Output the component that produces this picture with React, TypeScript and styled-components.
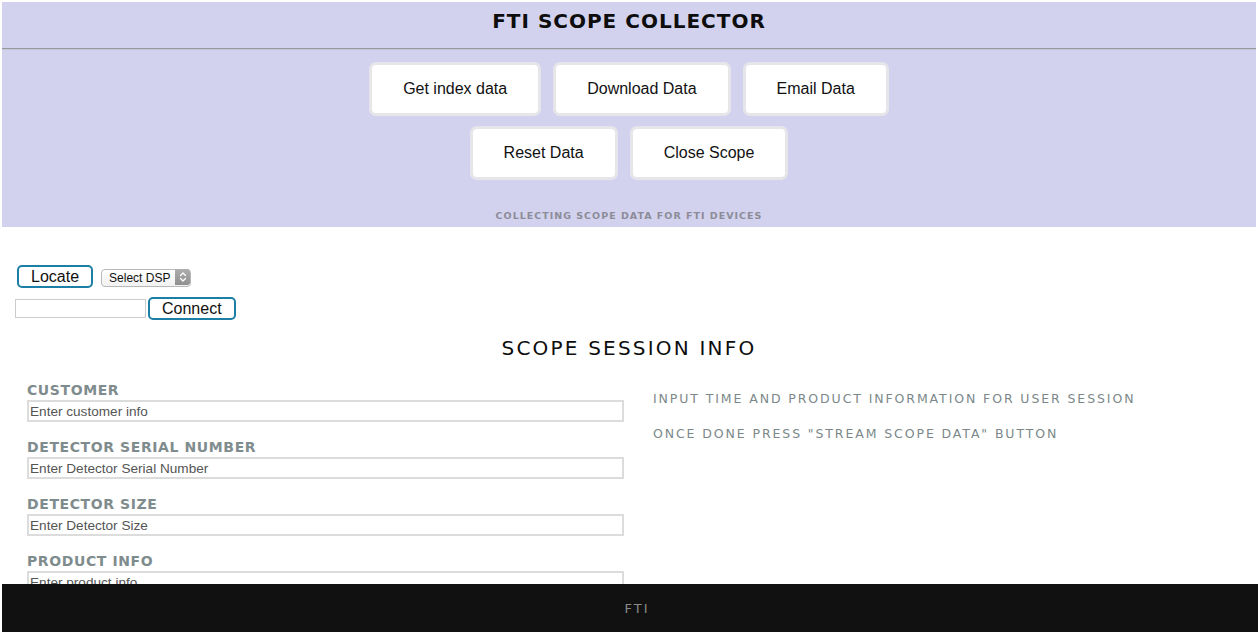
import React from "react";
import styled, { createGlobalStyle } from "styled-components";

const GlobalStyle = createGlobalStyle`
  html, body { background: #ffffff; }
  body {
    margin: 2px 4px 0 2px;
    font-family: "Liberation Sans", Arial, sans-serif;
    color: #111;
  }
  * { box-sizing: border-box; }
`;

const Header = styled.header`
  background: #d2d2ee;
  padding: 6px 0 5px;
`;

const Title = styled.h1`
  margin: 0 0 14px;
  font-family: "DejaVu Sans", Verdana, sans-serif;
  font-size: 20px;
  font-weight: bold;
  letter-spacing: 1px;
  line-height: 26px;
  text-align: center;
  color: #0d0d0d;
`;

const Rule = styled.hr`
  margin: 0;
  border: 0;
  border-top: 1px solid #9a9a9a;
  border-bottom: 1px solid #c4c4dc;
`;

const ButtonGroup = styled.div`
  display: flex;
  flex-direction: column;
  align-items: center;
  gap: 10px;
  padding-top: 12px;
`;

const ButtonRow = styled.div`
  display: flex;
  justify-content: center;
  gap: 12px;
`;

const ActionButton = styled.button`
  height: 54px;
  padding: 0 31px;
  background: #ffffff;
  border: 3px solid #e6e6ea;
  border-radius: 7px;
  font-family: "Liberation Sans", Arial, sans-serif;
  font-size: 16px;
  color: #111;
  cursor: pointer;
`;

const Subtitle = styled.div`
  margin-top: 30px;
  text-align: center;
  font-family: "DejaVu Sans", Verdana, sans-serif;
  font-size: 9.5px;
  font-weight: bold;
  letter-spacing: 1px;
  line-height: 12px;
  color: #8c8c98;
`;

const Controls = styled.section`
  display: flex;
  flex-direction: column;
  gap: 9px;
  padding: 38px 0 0 13px;
`;

const ControlRow = styled.div<{ $gap: number; $indent?: number }>`
  display: flex;
  align-items: center;
  gap: ${(p) => p.$gap}px;
  padding-left: ${(p) => p.$indent ?? 0}px;
`;

const OutlineButton = styled.button`
  height: 23px;
  padding: 0 12px;
  background: #ffffff;
  border: 2px solid #1d7fa6;
  border-radius: 5px;
  font-family: "Liberation Sans", Arial, sans-serif;
  font-size: 16px;
  line-height: 19px;
  color: #111;
`;

const SelectWrap = styled.span`
  position: relative;
  display: inline-block;
  width: 90px;
  height: 18px;
  margin-top: 1px;
`;

const NativeSelect = styled.select`
  appearance: none;
  -webkit-appearance: none;
  width: 100%;
  height: 100%;
  padding: 0 18px 0 7px;
  border: 1px solid #b8b8b8;
  border-radius: 4px;
  background: linear-gradient(#ffffff, #f1f1f1);
  font-family: "Liberation Sans", Arial, sans-serif;
  font-size: 12px;
  color: #111;
`;

const Stepper = styled.span`
  position: absolute;
  top: 1px;
  right: 1px;
  width: 15px;
  height: 16px;
  border-radius: 0 3px 3px 0;
  background: linear-gradient(#aeaeae, #8f8f8f);
  display: flex;
  align-items: center;
  justify-content: center;
  pointer-events: none;
`;

const AddressInput = styled.input`
  width: 131px;
  height: 19px;
  border: 1px solid #cccccc;
  padding: 0 3px;
  font-size: 13px;
`;

const SessionTitle = styled.h2`
  margin: 16px 0 0;
  text-align: center;
  font-family: "DejaVu Sans", Verdana, sans-serif;
  font-size: 20px;
  font-weight: normal;
  letter-spacing: 2.2px;
  line-height: 24px;
  color: #0d0d0d;
`;

const Columns = styled.div`
  display: grid;
  grid-template-columns: 1fr 1fr;
  padding-top: 21px;
  padding-bottom: 60px;
`;

const FormColumn = styled.div`
  display: flex;
  flex-direction: column;
  padding: 0 5px 0 25px;
  gap: 16px;
`;

const Field = styled.label`
  display: flex;
  flex-direction: column;
  gap: 1px;
`;

const FieldLabel = styled.span`
  font-family: "DejaVu Sans", Verdana, sans-serif;
  font-size: 14px;
  font-weight: bold;
  letter-spacing: 0.6px;
  line-height: 18px;
  color: #7f8c8d;
`;

const FieldInput = styled.input`
  width: 100%;
  height: 22px;
  border: 2px solid #dcdcdc;
  padding: 0 1px;
  font-family: "Liberation Sans", Arial, sans-serif;
  font-size: 13.6px;
  color: #333;
  &::placeholder { color: #555; }
`;

const InfoColumn = styled.div`
  display: flex;
  flex-direction: column;
  gap: 19px;
  padding: 10px 0 0 24px;
`;

const InfoText = styled.p`
  margin: 0;
  font-family: "DejaVu Sans", Verdana, sans-serif;
  font-size: 12.5px;
  letter-spacing: 1.9px;
  line-height: 16px;
  color: #7b8889;
`;

const Footer = styled.footer`
  position: fixed;
  left: 2px;
  right: 2px;
  bottom: 0;
  height: 48px;
  padding-left: 14px;
  background: #111111;
  display: flex;
  align-items: center;
  justify-content: center;
  font-family: "DejaVu Sans", Verdana, sans-serif;
  font-size: 13px;
  letter-spacing: 2px;
  color: #8a8a8a;
`;

const fields = [
  { label: "CUSTOMER", placeholder: "Enter customer info" },
  { label: "DETECTOR SERIAL NUMBER", placeholder: "Enter Detector Serial Number" },
  { label: "DETECTOR SIZE", placeholder: "Enter Detector Size" },
  { label: "PRODUCT INFO", placeholder: "Enter product info" },
];

export default function App() {
  return (
    <>
      <GlobalStyle />
      <Header>
        <Title>FTI SCOPE COLLECTOR</Title>
        <Rule />
        <ButtonGroup>
          <ButtonRow>
            <ActionButton>Get index data</ActionButton>
            <ActionButton>Download Data</ActionButton>
            <ActionButton>Email Data</ActionButton>
          </ButtonRow>
          <ButtonRow>
            <ActionButton>Reset Data</ActionButton>
            <ActionButton>Close Scope</ActionButton>
          </ButtonRow>
        </ButtonGroup>
        <Subtitle>COLLECTING SCOPE DATA FOR FTI DEVICES</Subtitle>
      </Header>

      <Controls>
        <ControlRow $gap={8} $indent={2}>
          <OutlineButton>Locate</OutlineButton>
          <SelectWrap>
            <NativeSelect defaultValue="">
              <option value="">Select DSP</option>
            </NativeSelect>
            <Stepper>
              <svg width="8" height="12" viewBox="0 0 8 12" fill="none" stroke="#fff" strokeWidth="1.3" strokeLinecap="round" strokeLinejoin="round">
                <path d="M1.5 4.5 L4 2 L6.5 4.5" />
                <path d="M1.5 7.5 L4 10 L6.5 7.5" />
              </svg>
            </Stepper>
          </SelectWrap>
        </ControlRow>
        <ControlRow $gap={2}>
          <AddressInput />
          <OutlineButton>Connect</OutlineButton>
        </ControlRow>
      </Controls>

      <SessionTitle>SCOPE SESSION INFO</SessionTitle>

      <Columns>
        <FormColumn>
          {fields.map((f) => (
            <Field key={f.label}>
              <FieldLabel>{f.label}</FieldLabel>
              <FieldInput placeholder={f.placeholder} />
            </Field>
          ))}
        </FormColumn>
        <InfoColumn>
          <InfoText>INPUT TIME AND PRODUCT INFORMATION FOR USER SESSION</InfoText>
          <InfoText>ONCE DONE PRESS "STREAM SCOPE DATA" BUTTON</InfoText>
        </InfoColumn>
      </Columns>

      <Footer>FTI</Footer>
    </>
  );
}
